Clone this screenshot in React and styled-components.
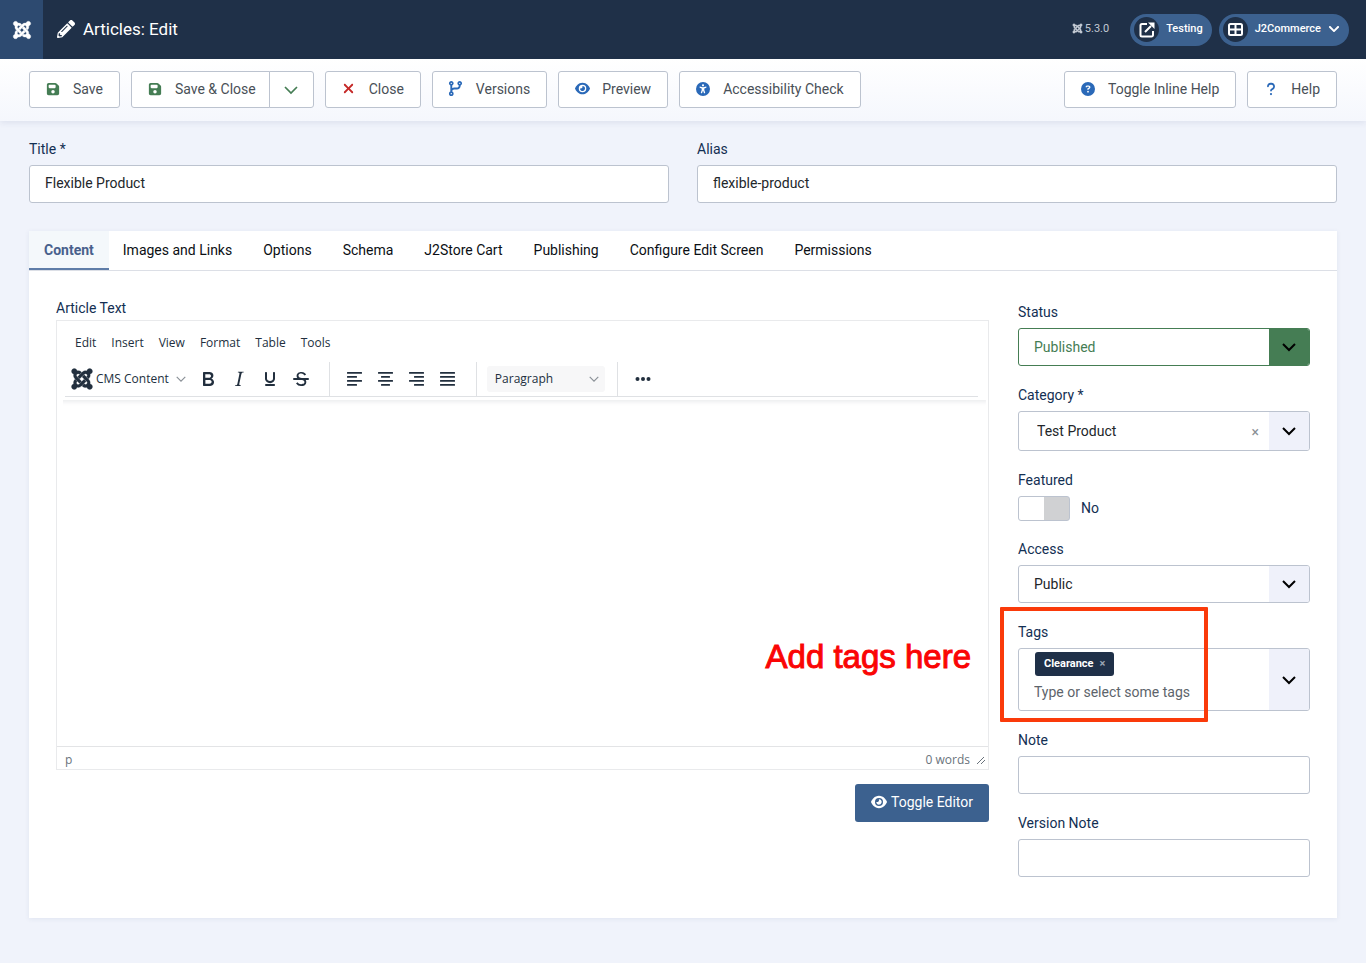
import React from "react";
import styled, { createGlobalStyle, css } from "styled-components";
import {
  FaJoomla, FaFloppyDisk, FaXmark, FaCodeBranch, FaEye,
  FaUniversalAccess, FaCircleQuestion, FaQuestion,
} from "react-icons/fa6";
import { FaPencilAlt, FaChevronDown } from "react-icons/fa";

const color = {
  navy: "#1f3048",
  blue: "#3c618f",
  link: "#2a69b8",
  green: "#457d54",
  page: "#f0f3fb",
  addon: "#eff1fa",
  line: "#bcc3cf",
  label: "#132f53",
  text: "#22262a",
  editor: "#222f3e",
};

const GlobalStyle = createGlobalStyle`
  *, *::before, *::after { box-sizing: border-box; }
  body {
    margin: 0;
    min-height: 100vh;
    background: ${color.page};
    color: ${color.text};
    font: 14px/22px Roboto, "Liberation Sans", sans-serif;
  }
  button, input, select, textarea { font: inherit; color: inherit; }
  button { cursor: pointer; }
  svg { display: block; flex: none; }
`;

/* ---------- header ---------- */

const Header = styled.header`
  display: flex;
  align-items: center;
  height: 59px;
  padding-right: 17px;
  background: ${color.navy};
  color: #fff;
`;

const Brand = styled.a`
  display: flex;
  align-items: center;
  justify-content: center;
  align-self: stretch;
  width: 43px;
  margin-right: 14px;
  background: #2d4a70;
  color: #fff;
`;

const PageTitle = styled.h1`
  display: flex;
  align-items: center;
  gap: 8px;
  margin: 0;
  padding-bottom: 2px;
  font-size: 17px;
  font-weight: 400;
`;

const HeaderTools = styled.div`
  display: flex;
  align-items: center;
  gap: 7px;
  margin-left: auto;
`;

const Version = styled.span`
  display: flex;
  align-items: center;
  gap: 2px;
  margin-right: 14px;
  padding-bottom: 2px;
  color: #c3cad4;
  font-size: 11px;
`;

const Pill = styled.button`
  display: flex;
  align-items: center;
  gap: 7px;
  height: 32px;
  padding: 0 9px 2px 4px;
  border: 0;
  border-radius: 16px;
  background: ${color.blue};
  color: #fff;
  font-size: 11px;
  font-weight: 500;
`;

const PillIcon = styled.span`
  display: flex;
  align-items: center;
  justify-content: center;
  width: 25px;
  height: 25px;
  margin-top: 2px;
  border-radius: 50%;
  background: ${color.navy};
`;

/* ---------- toolbar ---------- */

const Toolbar = styled.div`
  display: flex;
  gap: 11px;
  padding: 12px 29px 13px;
  background: linear-gradient(#fff, #f5f7fd);
  box-shadow: 0 2px 6px rgba(40, 60, 110, 0.09);
`;

const ToolButton = styled.button`
  display: flex;
  align-items: center;
  justify-content: center;
  gap: 11px;
  height: 37px;
  padding: 0 16px 2px 14px;
  border: 1px solid ${color.line};
  border-radius: 3px;
  background: #fff;
  color: #495057;
  white-space: nowrap;
`;

const ToolIcon = styled.span`
  display: flex;
  justify-content: center;
  width: 18px;
  color: ${(p) => p.$color || color.link};
`;

const Split = styled.div`
  display: flex;
  ${ToolButton}:first-child { border-radius: 3px 0 0 3px; padding-right: 13px; }
  ${ToolButton}:last-child {
    width: 45px;
    margin-left: -1px;
    padding: 0;
    border-radius: 0 3px 3px 0;
    color: ${color.green};
  }
`;

const Spacer = styled.div`
  flex: 1;
`;

/* ---------- form ---------- */

const Main = styled.main`
  padding: 17px 29px 45px;
`;

const TitleRow = styled.div`
  display: grid;
  grid-template-columns: 1fr 1fr;
  gap: 28px;
  margin-bottom: 28px;
`;

const Field = styled.div`
  display: flex;
  flex-direction: column;
  align-items: stretch;
`;

const Label = styled.label`
  margin-bottom: 5px;
  color: ${color.label};
`;

const box = css`
  width: 100%;
  border: 1px solid ${color.line};
  border-radius: 3px;
  background-color: #fff;
`;

const Input = styled.input`
  ${box}
  height: 38px;
  padding: 0 15px 2px;
`;

const SelectBox = styled.div`
  ${box}
  display: grid;
  grid-template-columns: 1fr 40px;
  height: ${(p) => p.$height || 38}px;
  overflow: hidden;
  border-color: ${(p) => (p.$success ? color.green : color.line)};
  color: ${(p) => (p.$success ? color.green : "inherit")};
`;

const Select = styled.select`
  grid-area: 1 / 1 / 2 / 3;
  min-width: 0;
  padding: 0 50px 1px ${(p) => p.$indent || 15}px;
  border: 0;
  background: none;
  appearance: none;
`;

const SelectArrow = styled.span`
  grid-area: 1 / 2;
  display: flex;
  align-items: center;
  justify-content: center;
  background: ${(p) => (p.$success ? color.green : color.addon)};
  color: #000;
  pointer-events: none;
`;

const ClearButton = styled.button`
  grid-area: 1 / 1;
  justify-self: end;
  align-self: center;
  z-index: 1;
  padding: 2px 10px 0;
  border: 0;
  background: none;
  color: #8a8f95;
  line-height: 16px;
`;

const SwitchRow = styled.label`
  display: flex;
  align-items: flex-start;
  gap: 11px;
  height: 24px;
  color: ${color.label};
  line-height: 24px;
`;

const Switch = styled.input`
  width: 52px;
  height: 25px;
  margin: 0;
  appearance: none;
  border: 1px solid ${color.line};
  border-radius: 3px;
  background: linear-gradient(90deg, #fff 50%, #d0d1d3 50%);
`;

const TagArea = styled.div`
  display: flex;
  flex-direction: column;
  align-items: flex-start;
  gap: 5px;
  min-width: 0;
  padding: 3px 14px 0 16px;
`;

const Tag = styled.span`
  display: flex;
  align-items: center;
  gap: 6px;
  height: 24px;
  padding: 0 9px 1px;
  border-radius: 3px;
  background: ${color.navy};
  color: #fff;
  font-size: 11px;
  font-weight: 700;
  button {
    padding: 0;
    border: 0;
    background: none;
    color: #9ba5b3;
  }
`;

const TagInput = styled.input`
  width: 100%;
  margin-left: -1px;
  padding: 0;
  border: 0;
  background: none;
  outline: 0;
  &::placeholder { color: #5d646b; opacity: 1; }
`;

const TagsField = styled(Field)`
  position: relative;
`;

const Highlight = styled.div`
  position: absolute;
  top: -14px;
  left: -18px;
  width: 208px;
  height: 115px;
  border: 4px solid #fa3a0a;
  border-radius: 1px;
  pointer-events: none;
`;

/* ---------- tabbed panel ---------- */

const Panel = styled.section`
  background: #fff;
  box-shadow: 0 1px 5px rgba(40, 60, 110, 0.08);
`;

const Tabs = styled.div`
  display: flex;
  height: 40px;
  border-bottom: 1px solid #dcdfe6;
`;

const Tab = styled.button`
  padding: 0 17px 1px 14px;
  border: 0;
  background: none;
  color: #0b0f14;
  white-space: nowrap;
  ${(p) =>
    p.$active &&
    css`
      padding: 0 15px 1px;
      background: #f4f8fb;
      color: #48608c;
      font-weight: 700;
      box-shadow: inset 0 -2px #5f7da8;
    `}
`;

const PanelBody = styled.div`
  display: grid;
  grid-template-columns: minmax(0, 1fr) 292px;
  gap: 29px;
  padding: 25px 27px 41px;
`;

const Sidebar = styled.div`
  display: flex;
  flex-direction: column;
  gap: 18px;
  padding-top: 5px;
`;

const EditorColumn = styled.div`
  display: flex;
  flex-direction: column;
  align-items: stretch;
`;

const EditorLabel = styled.label`
  color: ${color.label};
  line-height: 24px;
`;

/* ---------- rich text editor ---------- */

const Editor = styled.div`
  position: relative;
  display: flex;
  flex-direction: column;
  height: 450px;
  border: 1px solid #e9eaec;
  color: ${color.editor};
  font: 12px/20px "Open Sans", "Noto Sans", sans-serif;
`;

const EditorHead = styled.div`
  padding: 10px 10px 3px 8px;
  box-shadow: 0 2px 4px rgba(34, 47, 62, 0.09);
  clip-path: inset(0 2px -8px 6px);
`;

const MenuBar = styled.div`
  display: flex;
  gap: 15px;
  height: 24px;
  margin-bottom: 7px;
  padding: 0 10px;
`;

const FlatButton = styled.button`
  display: flex;
  align-items: center;
  justify-content: center;
  padding: 0;
  border: 0;
  background: none;
  white-space: nowrap;
`;

const ToolGroups = styled.div`
  display: flex;
  height: 35px;
  border-bottom: 1px solid #dfe1e4;
`;

const ToolGroup = styled.div`
  display: flex;
  align-items: center;
  padding: 0 12px 0 ${(p) => p.$left || 10}px;
  &:not(:last-child) { border-right: 1px solid #dfe1e4; }
  ${FlatButton} { height: 26px; }
`;

const ContentButton = styled(FlatButton)`
  gap: 2px;
  padding-right: 7px;
  svg:last-child { margin-left: 5px; }
`;

const IconButton = styled(FlatButton)`
  width: 31px;
`;

const FormatButton = styled(FlatButton)`
  justify-content: space-between;
  width: 118px;
  padding: 0 6px 0 8px;
  border-radius: 3px;
  background: #f7f7f8;
`;

const TextArea = styled.textarea`
  flex: 1;
  padding: 16px;
  border: 0;
  background: none;
  outline: 0;
  resize: none;
`;

const StatusBar = styled.div`
  display: flex;
  align-items: center;
  gap: 6px;
  height: 23px;
  padding: 3px 2px 0 8px;
  border-top: 1px solid #e3e4e6;
  color: #6a737c;
`;

const WordCount = styled.span`
  margin-left: auto;
`;

const Annotation = styled.p`
  position: absolute;
  right: 17px;
  bottom: 94px;
  margin: 0;
  color: #fa0505;
  font: 33px/36px "Liberation Sans", Arial, sans-serif;
  -webkit-text-stroke: 1px #fa0505;
  pointer-events: none;
`;

const ToggleEditor = styled.button`
  display: flex;
  align-items: center;
  align-self: flex-end;
  gap: 4px;
  height: 38px;
  margin-top: 14px;
  padding: 0 16px 2px;
  border: 0;
  border-radius: 3px;
  background: ${color.blue};
  color: #fff;
`;

/* ---------- drawings ---------- */

const Chevron = ({ size = 14, width = 2, tint = "currentColor" }) => (
  <svg width={size} height={size} viewBox="0 0 14 14" fill="none" stroke={tint} strokeWidth={width}>
    <path d="M1 4l6 6 6-6" />
  </svg>
);

const OpenIcon = () => (
  <svg width="16" height="16" viewBox="0 0 16 16" fill="none" stroke="#fff" strokeWidth="2">
    <path d="M8 2H3a1.500 1.500 0 0 0-1.500 1.500V13A1.500 1.500 0 0 0 3 14.500h9.500A1.500 1.500 0 0 0 14 13V9M6 10l6-6" />
    <path d="M9 0.500H15.500v6.500z" fill="#fff" stroke="none" />
  </svg>
);

const GridIcon = () => (
  <svg width="15" height="15" viewBox="0 0 15 15" fill="none" stroke="#fff" strokeWidth="2">
    <rect x="1" y="2" width="13" height="11" rx="1.500" />
    <path d="M7.500 2v11M1 7.500h13" />
  </svg>
);

const Lines = ({ spans }) => (
  <svg width="16" height="14" viewBox="0 0 16 14" fill={color.editor}>
    {spans.map(([x, w], i) => (
      <rect key={i} x={x} y={[0, 4, 8, 12][i]} width={w} height="1.700" rx="0.500" />
    ))}
  </svg>
);

const alignments = [
  ["Align left", [[0, 15], [0, 10], [0, 15], [0, 10]]],
  ["Align center", [[0, 15], [3, 9], [0, 15], [3, 9]]],
  ["Align right", [[0, 15], [5, 10], [0, 15], [5, 10]]],
  ["Justify", [[0, 15], [0, 15], [0, 15], [0, 15]]],
];

const Glyph = ({ children }) => (
  <svg width="24" height="24" viewBox="0 0 24 24" fill={color.editor} fillRule="evenodd">
    {children}
  </svg>
);

const BoldIcon = () => (
  <Glyph>
    <path d="M7.800 19c-.3 0-.5 0-.6-.2l-.2-.5V5.700c0-.2 0-.4.2-.5l.6-.2h5c1.500 0 2.700.3 3.500 1 .7.600 1.100 1.400 1.100 2.500a3 3 0 0 1-.6 1.900c-.4.600-1 1-1.600 1.200.4.100.9.300 1.300.6s.8.700 1 1.200c.4.400.5 1 .5 1.600 0 1.300-.4 2.300-1.300 3-.8.700-2.100 1-3.800 1H7.800Zm5-8.300c.6 0 1.200-.1 1.600-.5.4-.3.6-.7.6-1.300 0-1.100-.8-1.700-2.300-1.700H9.300v3.500h3.400Zm.5 6c.7 0 1.300-.1 1.700-.4.400-.4.600-.9.600-1.500s-.2-1-.7-1.400c-.4-.3-1-.4-2-.4H9.400v3.800h4Z" />
  </Glyph>
);

const ItalicIcon = () => (
  <Glyph>
    <path d="m16.700 4.700-.1.900h-.3c-.6 0-1 0-1.400.3-.3.300-.4.600-.5 1.100l-2.100 9.800v.6c0 .5.400.800 1.400.800h.2l-.2.800H8l.2-.8h.2c1.100 0 1.800-.5 2-1.500l2-9.800.1-.5c0-.6-.4-.8-1.400-.8h-.3l.2-.9h5.800Z" />
  </Glyph>
);

const UnderlineIcon = () => (
  <Glyph>
    <path d="M16 5c.6 0 1 .4 1 1v5.500a4 4 0 0 1-.4 1.800l-1 1.400a5.300 5.300 0 0 1-5.500 1 5 5 0 0 1-1.600-1c-.5-.4-.8-.9-1.100-1.400a4 4 0 0 1-.4-1.800V6c0-.6.4-1 1-1s1 .4 1 1v5.500c0 .3 0 .6.200 1l.6.700a3.300 3.300 0 0 0 2.200.8 3.400 3.400 0 0 0 2.200-.8c.3-.2.400-.5.600-.8l.2-.9V6c0-.6.4-1 1-1ZM8 17h8c.6 0 1 .4 1 1s-.4 1-1 1H8a1 1 0 0 1 0-2Z" />
  </Glyph>
);

const StrikeIcon = () => (
  <Glyph>
    <path d="M15.600 8.500c-.5-.7-1-1.100-1.300-1.300-.6-.4-1.300-.6-2-.6-2.700 0-2.800 1.700-2.800 2.100 0 1.600 1.800 2 3.200 2.300 4.400.9 4.600 2.800 4.600 3.900 0 1.400-.7 4.100-5 4.100A6.200 6.200 0 0 1 7 16.400l1.500-1.100c.4.600 1.600 2 3.700 2 1.600 0 2.500-.4 3-1.200.4-.8.300-2-.8-2.600-.7-.4-1.600-.7-2.900-1-1-.2-3.900-.8-3.900-3.600C7.600 6 10.300 5 12.400 5c2.900 0 4.200 1.600 4.700 2.400l-1.500 1.100Z" />
    <path d="M5 11h14a1 1 0 0 1 0 2H5a1 1 0 0 1 0-2Z" />
  </Glyph>
);

const MoreIcon = () => (
  <svg width="16" height="6" viewBox="0 0 16 6" fill={color.editor}>
    <circle cx="2.500" cy="3" r="2" />
    <circle cx="8" cy="3" r="2" />
    <circle cx="13.500" cy="3" r="2" />
  </svg>
);

const ResizeIcon = () => (
  <svg width="10" height="10" viewBox="0 0 10 10" fill="none" stroke="#6a737c">
    <path d="M1 9l7-7M5 9l4-4" />
  </svg>
);

/* ---------- page ---------- */

const tabs = ["Content", "Images and Links", "Options", "Schema", "J2Store Cart", "Publishing", "Configure Edit Screen", "Permissions"];
const menus = ["Edit", "Insert", "View", "Format", "Table", "Tools"];

const Tool = ({ icon, tint, children }) => (
  <ToolButton type="button">
    <ToolIcon $color={tint}>{icon}</ToolIcon>
    {children}
  </ToolButton>
);

const TextField = ({ id, label, value }) => (
  <Field>
    <Label htmlFor={id}>{label}</Label>
    <Input id={id} type="text" defaultValue={value} />
  </Field>
);

const SelectField = ({ id, label, option, success, height, indent, clearable }) => (
  <Field>
    <Label htmlFor={id}>{label}</Label>
    <SelectBox $success={success} $height={height}>
      <Select id={id} $indent={indent}>
        <option>{option}</option>
      </Select>
      {clearable && <ClearButton type="button" aria-label="Clear">×</ClearButton>}
      <SelectArrow $success={success}><Chevron /></SelectArrow>
    </SelectBox>
  </Field>
);

export default function App() {
  return (
    <>
      <GlobalStyle />
      <Header>
        <Brand href="#" aria-label="Home">
          <FaJoomla size={20} stroke="currentColor" strokeWidth={8} />
        </Brand>
        <PageTitle><FaPencilAlt size={18} />Articles: Edit</PageTitle>
        <HeaderTools>
          <Version><FaJoomla size={11} stroke="currentColor" strokeWidth={14} />5.3.0</Version>
          <Pill type="button"><PillIcon><OpenIcon /></PillIcon>Testing</Pill>
          <Pill type="button">
            <PillIcon><GridIcon /></PillIcon>J2Commerce<FaChevronDown size={12} />
          </Pill>
        </HeaderTools>
      </Header>

      <Toolbar>
        <Tool icon={<FaFloppyDisk size={14} />} tint={color.green}>Save</Tool>
        <Split>
          <Tool icon={<FaFloppyDisk size={14} />} tint={color.green}>Save &amp; Close</Tool>
          <ToolButton type="button" aria-label="More save options"><Chevron width={1.7} /></ToolButton>
        </Split>
        <Tool icon={<FaXmark size={15} />} tint="#c52827">Close</Tool>
        <Tool icon={<FaCodeBranch size={15} />}>Versions</Tool>
        <Tool icon={<FaEye size={15} />}>Preview</Tool>
        <Tool icon={<FaUniversalAccess size={14} />}>Accessibility Check</Tool>
        <Spacer />
        <Tool icon={<FaCircleQuestion size={14} />}>Toggle Inline Help</Tool>
        <Tool icon={<FaQuestion size={14} />}>Help</Tool>
      </Toolbar>

      <Main>
        <TitleRow>
          <TextField id="title" label="Title *" value="Flexible Product" />
          <TextField id="alias" label="Alias" value="flexible-product" />
        </TitleRow>

        <Panel>
          <Tabs role="tablist">
            {tabs.map((name, i) => (
              <Tab key={name} type="button" role="tab" aria-selected={i === 0} $active={i === 0}>{name}</Tab>
            ))}
          </Tabs>
          <PanelBody>
            <EditorColumn>
              <EditorLabel htmlFor="article">Article Text</EditorLabel>
              <Editor>
                <EditorHead>
                  <MenuBar>
                    {menus.map((name) => <FlatButton key={name} type="button">{name}</FlatButton>)}
                  </MenuBar>
                  <ToolGroups>
                    <ToolGroup $left={5}>
                      <ContentButton type="button">
                        <FaJoomla size={24} stroke="currentColor" strokeWidth={6} />
                        CMS Content
                        <Chevron size={10} width={1.6} tint="#8a9097" />
                      </ContentButton>
                      <IconButton type="button" aria-label="Bold"><BoldIcon /></IconButton>
                      <IconButton type="button" aria-label="Italic"><ItalicIcon /></IconButton>
                      <IconButton type="button" aria-label="Underline"><UnderlineIcon /></IconButton>
                      <IconButton type="button" aria-label="Strikethrough"><StrikeIcon /></IconButton>
                    </ToolGroup>
                    <ToolGroup>
                      {alignments.map(([name, spans]) => (
                        <IconButton key={name} type="button" aria-label={name}><Lines spans={spans} /></IconButton>
                      ))}
                    </ToolGroup>
                    <ToolGroup>
                      <FormatButton type="button">
                        Paragraph
                        <Chevron size={10} width={1.6} tint="#8a9097" />
                      </FormatButton>
                    </ToolGroup>
                    <ToolGroup>
                      <IconButton type="button" aria-label="More"><MoreIcon /></IconButton>
                    </ToolGroup>
                  </ToolGroups>
                </EditorHead>
                <TextArea id="article" />
                <Annotation>Add tags here</Annotation>
                <StatusBar>
                  <span>p</span>
                  <WordCount>0 words</WordCount>
                  <ResizeIcon />
                </StatusBar>
              </Editor>
              <ToggleEditor type="button"><FaEye size={16} />Toggle Editor</ToggleEditor>
            </EditorColumn>

            <Sidebar>
              <SelectField id="status" label="Status" option="Published" success />
              <SelectField id="category" label="Category *" option="Test Product" height={40} indent={18} clearable />
              <Field>
                <Label htmlFor="featured">Featured</Label>
                <SwitchRow><Switch id="featured" type="checkbox" />No</SwitchRow>
              </Field>
              <SelectField id="access" label="Access" option="Public" />
              <TagsField>
                <Label htmlFor="tags">Tags</Label>
                <SelectBox $height={63}>
                  <TagArea>
                    <Tag>Clearance<button type="button" aria-label="Remove Clearance">×</button></Tag>
                    <TagInput id="tags" type="text" placeholder="Type or select some tags" />
                  </TagArea>
                  <SelectArrow><Chevron /></SelectArrow>
                </SelectBox>
                <Highlight />
              </TagsField>
              <TextField id="note" label="Note" />
              <TextField id="version-note" label="Version Note" />
            </Sidebar>
          </PanelBody>
        </Panel>
      </Main>
    </>
  );
}
